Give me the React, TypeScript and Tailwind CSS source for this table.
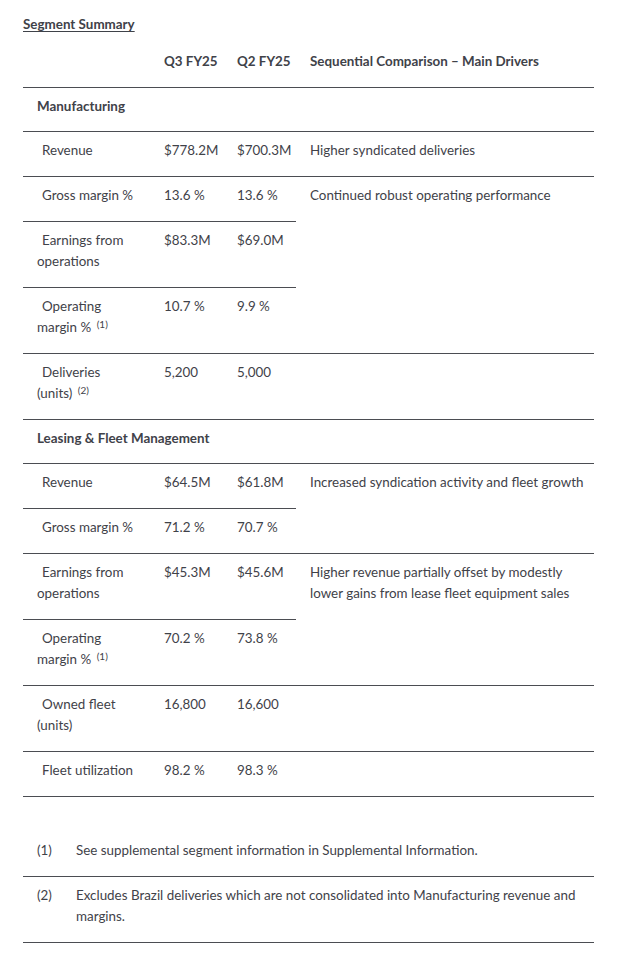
import React from "react";

type Row = {
  label: React.ReactNode;
  q3: string;
  q2: string;
  driver?: React.ReactNode;
  span?: number;
  skipDriver?: boolean;
};

const Sup = ({ n }: { n: number }) => (
  <sup className="text-[10px] ml-[2px] relative -top-[4px]">({n})</sup>
);

const manufacturing: Row[] = [
  { label: "Revenue", q3: "$778.2M", q2: "$700.3M", driver: "Higher syndicated deliveries" },
  { label: "Gross margin %", q3: "13.6 %", q2: "13.6 %", driver: "Continued robust operating performance", span: 3 },
  { label: <>Earnings from<br />operations</>, q3: "$83.3M", q2: "$69.0M", skipDriver: true },
  { label: <>Operating<br />margin % <Sup n={1} /></>, q3: "10.7 %", q2: "9.9 %", skipDriver: true },
  { label: <>Deliveries<br />(units) <Sup n={2} /></>, q3: "5,200", q2: "5,000", driver: "" },
];

const leasing: Row[] = [
  { label: "Revenue", q3: "$64.5M", q2: "$61.8M", driver: "Increased syndication activity and fleet growth", span: 2 },
  { label: "Gross margin %", q3: "71.2 %", q2: "70.7 %", skipDriver: true },
  {
    label: <>Earnings from<br />operations</>,
    q3: "$45.3M",
    q2: "$45.6M",
    driver: <>Higher revenue partially offset by modestly<br />lower gains from lease fleet equipment sales</>,
    span: 2,
  },
  { label: <>Operating<br />margin % <Sup n={1} /></>, q3: "70.2 %", q2: "73.8 %", skipDriver: true },
  { label: <>Owned fleet<br />(units)</>, q3: "16,800", q2: "16,600", driver: "" },
  { label: "Fleet utilization", q3: "98.2 %", q2: "98.3 %", driver: "" },
];

const cell = "align-top pl-[14px] pr-2 pt-2 pb-[15px] border-b border-[#4b4d52]";

function Section({ title, rows }: { title: string; rows: Row[] }) {
  return (
    <>
      <tr>
        <td colSpan={4} className="align-top pl-[14px] pt-2 pb-[14px] border-b border-[#4b4d52] font-bold">
          {title}
        </td>
      </tr>
      {rows.map((r, i) => (
        <tr key={i}>
          <td className={`${cell} indent-[5px]`}>{r.label}</td>
          <td className={`${cell} whitespace-nowrap`}>{r.q3}</td>
          <td className={`${cell} whitespace-nowrap`}>{r.q2}</td>
          {!r.skipDriver && (
            <td rowSpan={r.span ?? 1} className={`${cell} whitespace-nowrap`}>{r.driver}</td>
          )}
        </tr>
      ))}
    </>
  );
}

export default function App() {
  return (
    <div
      className="bg-white min-h-[953px] px-[23px] pt-[13px] text-[13.4px] leading-[21px] text-[#3f4249]"
      style={{ fontFamily: "Lato, 'Open Sans', sans-serif" }}
    >
      <h1 className="font-bold underline underline-offset-2 leading-5 mt-[1px]">Segment Summary</h1>

      <table className="w-[571px] table-fixed border-collapse mt-[9px]">
        <colgroup>
          <col className="w-[127px]" />
          <col className="w-[73px]" />
          <col className="w-[73px]" />
          <col className="w-[298px]" />
        </colgroup>
        <thead>
          <tr className="font-bold text-left">
            <th className={cell}></th>
            <th className={`${cell} whitespace-nowrap`}>Q3 FY25</th>
            <th className={`${cell} whitespace-nowrap`}>Q2 FY25</th>
            <th className={`${cell} whitespace-nowrap`}>Sequential Comparison – Main Drivers</th>
          </tr>
        </thead>
        <tbody>
          <Section title="Manufacturing" rows={manufacturing} />
          <Section title="Leasing & Fleet Management" rows={leasing} />
        </tbody>
      </table>

      <table className="w-[571px] table-fixed border-collapse mt-[35px]">
        <colgroup>
          <col className="w-[39px]" />
          <col />
        </colgroup>
        <tbody>
          <tr>
            <td className={cell}>(1)</td>
            <td className={cell}>See supplemental segment information in Supplemental Information.</td>
          </tr>
          <tr>
            <td className={cell}>(2)</td>
            <td className={cell}>
              Excludes Brazil deliveries which are not consolidated into Manufacturing revenue and
              <br />
              margins.
            </td>
          </tr>
        </tbody>
      </table>
    </div>
  );
}
